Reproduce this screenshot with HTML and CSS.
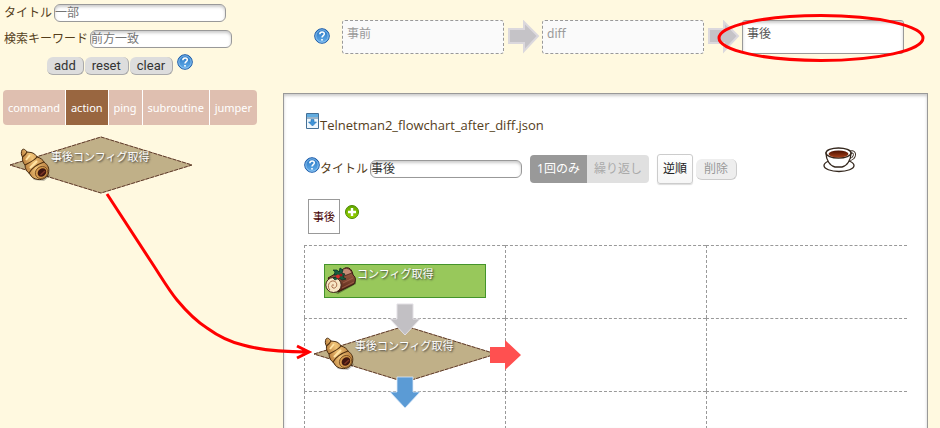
FILE: index.html
```html
<!DOCTYPE html>
<html lang="ja">
<head>
<meta charset="utf-8">
<title>Telnetman2</title>
<link rel="stylesheet" href="styles.css">
</head>
<body>
<svg class="defs" aria-hidden="true">
  <defs>
    <linearGradient id="blue" x1="0" y1="0" x2="0" y2="1"><stop offset="0" stop-color="#2472c0"/><stop offset="1" stop-color="#66b0ec"/></linearGradient>
    <linearGradient id="green" x1="0" y1="0" x2="0" y2="1"><stop offset="0" stop-color="#63a800"/><stop offset="1" stop-color="#98d000"/></linearGradient>
    <linearGradient id="crust" x1="0" y1="0.6" x2="1" y2="0.2"><stop offset="0" stop-color="#a8682a"/><stop offset=".45" stop-color="#f0c478"/><stop offset="1" stop-color="#a5662a"/></linearGradient>
    <linearGradient id="bark" x1="0" y1="0" x2="0" y2="1"><stop offset="0" stop-color="#a86a50"/><stop offset="1" stop-color="#552213"/></linearGradient>
    <linearGradient id="tea" x1="0" y1="0" x2="0" y2="1"><stop offset="0" stop-color="#4a1000"/><stop offset="1" stop-color="#a8401a"/></linearGradient>
  </defs>
  <symbol id="help" viewBox="0 0 16 16">
    <circle cx="8" cy="8" r="7.3" fill="url(#blue)" stroke="#1b5aa8"/>
    <circle cx="8" cy="8" r="6.2" fill="none" stroke="#9accf4" stroke-width=".8"/>
    <path d="M5.8 6.3C5.8 3.2 10.4 3.2 10.3 6C10.3 7.6 8 7.7 8 9.6" fill="none" stroke="#fff" stroke-width="1.5"/>
    <rect x="7.2" y="11" width="1.6" height="1.6" fill="#fff"/>
  </symbol>
  <symbol id="cornet" viewBox="0 0 30 34">
    <path d="M8 25L14 32L24 33L30 28L28 24Z" fill="#00000040"/>
    <path d="M2 2C3 .5 5 1 7 4L11 4.500C14 5 16 7 17 9C21 10 23 12 24 14C28 17 29.500 20 28.500 25C27 30 23 32 18 31.500C14 31 11 29 10 26C7 24 5 21 5 17C3 15 2 12 2.500 9C1 7 1 4 2 2Z" fill="url(#crust)" stroke="#4a2e12" stroke-width="1"/>
    <path d="M2.500 9C4 8 6 6 7 4M5 17C9 15 15 12 17 9M9 25C12 20 18 16 24 14" fill="none" stroke="#51300f" stroke-width="1.100"/>
    <path d="M6 12L10 7M10 20L17 13" fill="none" stroke="#ffe3a3" stroke-width="2"/>
    <ellipse cx="21.500" cy="24.500" rx="6.500" ry="5.700" transform="rotate(-40 21.500 24.500)" fill="#d69b4d" stroke="#6b431c" stroke-width=".8"/>
    <ellipse cx="22" cy="24.500" rx="4.700" ry="3.800" transform="rotate(-40 22 24.500)" fill="#401710"/>
    <path d="M20.500 27L25 23" stroke="#7d3625" stroke-width="1.500"/>
  </symbol>
  <symbol id="log" viewBox="0 0 32 28">
    <path d="M8 25L13 27L31 17V12Z" fill="#00000055"/>
    <path d="M3 11L17 3L20 1C24 0 27 2 28 8C31 10 31 14 29 17L13 25Z" fill="url(#bark)" stroke="#35160f"/>
    <path d="M16 5C18 0 25 0 27 6L19 9Z" fill="#c48d76" stroke="#49211a" stroke-width=".8"/>
    <path d="M18 16L28 11M17 21L29 15" stroke="#b5735a" stroke-width=".6"/>
    <ellipse cx="8.5" cy="18" rx="7.7" ry="7.5" fill="#f7e6c4" stroke="#42251a" stroke-width="1"/>
    <path d="M9 18.500C7.500 16.500 5.500 19.500 8 21C12 22 13.500 15.500 9 14C4 13 1.500 20 5 23" fill="none" stroke="#a56a48" stroke-width="1"/>
    <path d="M14 10L12 8L9 8L10 5L8 3L12 3L14 5L15 1L18 3L17 6L20 7L18 10L21 12L17 13L14 11L10 13L8 11L11 10Z" fill="#155b3e" stroke="#082d22" stroke-width=".7"/>
    <circle cx="13" cy="9.500" r="1.900" fill="#d72a2b"/><circle cx="16" cy="8" r="1.500" fill="#a4121d"/>
  </symbol>
  <symbol id="cup" viewBox="0 0 34 28">
    <ellipse cx="16" cy="19.500" rx="15" ry="6" fill="#fff" stroke="#33261c" stroke-width="1.300"/>
    <path d="M26 7C31 4 33 8 30 12C28 14 26 14 24 14" fill="none" stroke="#33261c" stroke-width="3"/>
    <path d="M26 7C31 4 33 8 30 12C28 14 26 14 24 14" fill="none" stroke="#fff" stroke-width="1.200"/>
    <path d="M3 7C3 14 7 20 12 21H19C24 20 28 14 28 7Z" fill="#fff" stroke="#33261c" stroke-width="1.300"/>
    <ellipse cx="15.500" cy="7" rx="12.500" ry="5" fill="#fff" stroke="#33261c" stroke-width="1.300"/>
    <ellipse cx="15.500" cy="8" rx="10" ry="3.500" fill="url(#tea)"/>
  </symbol>
  <symbol id="diamond" viewBox="0 0 184 58">
    <path d="M1 29L92 1L183 29L92 57Z" fill="#c0b088" stroke="#c9a98c"/>
    <path d="M1 29L92 1L183 29L92 57Z" fill="none" stroke="#5c3d2b" stroke-dasharray="4 1"/>
  </symbol>
</svg>

<div class="app">
  <aside class="side">
    <div class="field"><label for="find-title">タイトル</label><input id="find-title" class="wide" type="text" placeholder="一部"></div>
    <div class="field"><label for="find-key">検索キーワード</label><input id="find-key" class="key" type="text" placeholder="前方一致"></div>
    <div class="actions">
      <button class="pill">add</button><button class="pill">reset</button><button class="pill">clear</button>
      <svg class="help" role="img" aria-label="help"><use href="#help"/></svg>
    </div>
    <nav class="kinds">
      <button>command</button><button class="on">action</button><button>ping</button><button>subroutine</button><button>jumper</button>
    </nav>
    <div class="decision">
      <svg class="shape"><use href="#diamond"/></svg>
      <svg class="cornet"><use href="#cornet"/></svg>
      <span class="node-text">事後コンフィグ取得</span>
    </div>
  </aside>

  <main class="work">
    <header class="stages">
      <svg class="help" role="img" aria-label="help"><use href="#help"/></svg>
      <div class="stage">事前</div>
      <svg class="step" viewBox="0 0 38 34"><path d="M5 9H20V2L34 16L20 31V23H5Z" fill="#c5c3c7" stroke="#dbd8dd" stroke-width="2"/></svg>
      <div class="stage">diff</div>
      <svg class="step" viewBox="0 0 38 34"><path d="M5 9H20V2L34 16L20 31V23H5Z" fill="#c5c3c7" stroke="#dbd8dd" stroke-width="2"/></svg>
      <div class="stage current">事後
        <svg class="ring" viewBox="0 0 208 50"><ellipse cx="104" cy="25" rx="102" ry="22.500" fill="none" stroke="#f00" stroke-width="3"/></svg>
      </div>
    </header>

    <section class="panel">
      <div class="file">
        <svg class="download" viewBox="0 0 13 16"><path d="M.5 .5H12.500V15.500H.5Z" fill="#eef7fd" stroke="#447096"/><path d="M1 1H12V4H1Z" fill="#62ade1"/><path d="M1 5H12" stroke="#447096"/><path d="M5 6.500H8V9H10.500L6.500 13L2.500 9H5Z" fill="#3e93d8" stroke="#2672b4" stroke-width=".6"/></svg>
        <a href="#">Telnetman2_flowchart_after_diff.json</a>
      </div>
      <div class="tools">
        <svg class="help" role="img" aria-label="help"><use href="#help"/></svg>
        <label for="flow-title">タイトル</label><input id="flow-title" type="text" value="事後">
        <div class="repeat"><button class="on">1回のみ</button><button>繰り返し</button></div>
        <button class="reverse">逆順</button>
        <button class="pill remove" disabled>削除</button>
        <svg class="cup"><use href="#cup"/></svg>
      </div>
      <div class="sheets">
        <button class="sheet">事後</button>
        <button class="add" aria-label="追加"><svg viewBox="0 0 14 14"><circle cx="7" cy="7" r="6.500" fill="url(#green)" stroke="#4b8a00"/><path d="M7 3V11M3 7H11" stroke="#fff" stroke-width="2.400"/></svg></button>
      </div>
      <div class="flow">
        <div class="cell">
          <div class="command"><svg class="log"><use href="#log"/></svg><span class="node-text">コンフィグ取得</span></div>
          <svg class="arrow down" viewBox="0 0 32 34"><path d="M8 1H24V16H31L16 32L1 16H8Z" fill="#c2c0c4" stroke="#e2dfe4"/></svg>
        </div>
        <div class="cell"></div><div class="cell"></div>
        <div class="cell">
          <div class="decision">
            <svg class="shape"><use href="#diamond"/></svg>
            <svg class="cornet"><use href="#cornet"/></svg>
            <span class="node-text">事後コンフィグ取得</span>
          </div>
          <svg class="arrow right" viewBox="0 0 32 32"><path d="M0 8H15V1L31 16L15 31V24H0Z" fill="#ff5050"/></svg>
          <svg class="arrow down" viewBox="0 0 32 34"><path d="M8 1H24V16H31L16 32L1 16H8Z" fill="#5b9bd5" stroke="#dceafa" stroke-width=".8"/></svg>
        </div>
        <div class="cell"></div><div class="cell"></div>
        <div class="cell"></div><div class="cell"></div><div class="cell"></div>
      </div>
    </section>
  </main>

  <svg class="trail" viewBox="0 0 208 168"><path d="M3 3L46 69C56 84 64 98 73 109C83 121 92 130 103 137C114 145 126 151 139 154C160 160 180 161 204 161M193 155L205 161L193 167" fill="none" stroke="#f00" stroke-width="3"/></svg>
</div>
</body>
</html>
```
FILE: styles.css
```css
* { box-sizing: border-box; }

body {
  margin: 0;
  background: #fff9e0;
  color: #553e1b;
  font: 12px/18px "Noto Sans", "Noto Sans CJK JP", sans-serif;
}

button, input { font: inherit; color: inherit; margin: 0; }
button { white-space: nowrap; }
svg { display: block; flex: none; }
.defs { position: absolute; width: 0; height: 0; }

.app {
  position: relative;
  display: flex;
  height: 100vh;
  overflow: hidden;
}

.side {
  flex: none;
  width: 283px;
  padding: 4px 3px;
}

.field {
  display: flex;
  gap: 2px;
  height: 18px;
  margin-bottom: 8px;
  padding-left: 1px;
}

input {
  width: 152px;
  height: 18px;
  padding: 0;
  border: 1px solid #999;
  border-radius: 6px;
  background: #fff;
  box-shadow: inset 0 2px 3px #ccc;
  color: #333;
}
input::placeholder { color: #757575; }
.wide { width: 172px; }
.key { width: 142px; }

.help { width: 16px; height: 16px; }

.actions {
  display: flex;
  gap: 1px;
  padding-left: 44px;
  margin-bottom: 15px;
}
.actions .pill { margin-top: 1px; }
.actions .help { margin: -2px 3px 0; }

.pill {
  height: 18px;
  padding: 0 7px;
  border: solid #aaa;
  border-width: 0 1px 1px 0;
  border-radius: 6px;
  background: #ddd;
  color: #333;
  font: 13px/16px Roboto, "Noto Sans CJK JP", sans-serif;
}

.kinds {
  display: flex;
  width: 254px;
  height: 35px;
  border-radius: 4px;
  overflow: hidden;
}
.kinds button {
  flex: auto;
  padding: 0 4px;
  border: 0;
  border-left: 1px solid #fff;
  background: #dfbfb0;
  color: #fff;
  font-size: 11px;
}
.kinds button:first-child { border-left: 0; }
.kinds .on { background: #996640; }

.decision {
  position: relative;
  width: 184px;
  height: 58px;
  margin: 11px 6px;
}
.shape { width: 184px; height: 58px; }
.decision .cornet {
  position: absolute;
  top: 12px;
  left: 11px;
  width: 30px;
  height: 34px;
}
.decision .node-text { position: absolute; top: 12px; left: 42px; }

.node-text {
  color: #fff;
  font-size: 11px;
  line-height: 18px;
  white-space: nowrap;
  text-shadow: 1px 1px 2px #333;
}

.work {
  flex: 1;
  min-width: 0;
  display: flex;
  flex-direction: column;
  padding-right: 12px;
}

.stages {
  display: flex;
  height: 93px;
  padding: 20px 0 0 31px;
}
.stages .help { margin: 8px 12px 0 0; }
.stage {
  position: relative;
  flex: none;
  width: 162px;
  height: 34px;
  padding: 4px;
  border: 1px dashed #999;
  border-radius: 3px;
  background: #fafafa;
  color: #999;
}
.current {
  border-style: solid;
  background: #fff;
  box-shadow: inset 0 2px 3px #ccc;
  color: #555;
}
.step { width: 38px; height: 34px; }
.ring {
  position: absolute;
  top: -8px;
  left: -26px;
  width: 208px;
  height: 50px;
}

.panel {
  flex: 1;
  min-height: 0;
  padding: 19px 20px 0;
  border: 1px solid #999;
  border-bottom: 0;
  background: #fff;
  box-shadow: inset 0 2px 3px #ccc;
}

.file {
  display: flex;
  gap: 1px;
  height: 41px;
  padding-left: 2px;
}
.download { width: 13px; height: 16px; }
.file a {
  margin-top: 3px;
  color: inherit;
  font-family: "Open Sans", sans-serif;
  font-size: 13px;
  text-decoration: none;
}

.tools {
  display: flex;
  align-items: center;
  height: 30px;
}
.tools .help { align-self: flex-start; margin-top: 3px; }
.tools input { margin: 0 8px 0 2px; }

.repeat {
  display: flex;
  height: 28px;
  border-radius: 4px;
  overflow: hidden;
}
.repeat button {
  padding: 0 7px;
  border: 0;
  background: #e0e0e0;
  color: #aaa;
}
.repeat .on { background: #999; color: #fff; }

.reverse {
  height: 30px;
  margin: 0 3px 0 8px;
  padding: 0 5px;
  border: 1px solid #ccc;
  border-radius: 3px;
  background: linear-gradient(#fff, #f6f6f6);
  box-shadow: 0 1px 1px #ddd;
  color: #222;
}
.remove {
  height: 21px;
  padding: 0 8px;
  border-color: #ccc;
  background: #eee;
  color: #999;
  font-size: 12px;
}
.cup { width: 34px; height: 28px; margin: -18px 50px 0 auto; }

.sheets {
  display: flex;
  gap: 5px;
  height: 46px;
  margin-top: 15px;
  padding-left: 4px;
}
.sheet {
  height: 35px;
  padding: 0 4px;
  border: 1px solid #999;
  background: #fff;
  color: #400;
  font-size: 11px;
}
.add {
  width: 14px;
  height: 14px;
  margin-top: 6px;
  padding: 0;
  border: 0;
  background: none;
}

.flow {
  display: grid;
  grid-template-columns: repeat(3, 1fr);
  grid-auto-rows: 73px;
}
.cell {
  position: relative;
  border: dashed #999;
  border-width: 1px 0 0 1px;
}
.command {
  display: flex;
  width: 162px;
  height: 34px;
  margin: 18px 19px;
  border: 1px solid #44942b;
  background: #98c85b;
}
.log { width: 32px; height: 28px; margin-top: 2px; }
.cell .decision { margin: 6px 8px; }
.arrow { position: absolute; z-index: 1; }
.down { top: 57px; left: 84px; width: 32px; height: 34px; }
.right { top: 20px; left: 185px; width: 32px; height: 32px; }

.trail {
  position: absolute;
  top: 191px;
  left: 104px;
  width: 208px;
  height: 168px;
  overflow: visible;
  z-index: 2;
}
```
